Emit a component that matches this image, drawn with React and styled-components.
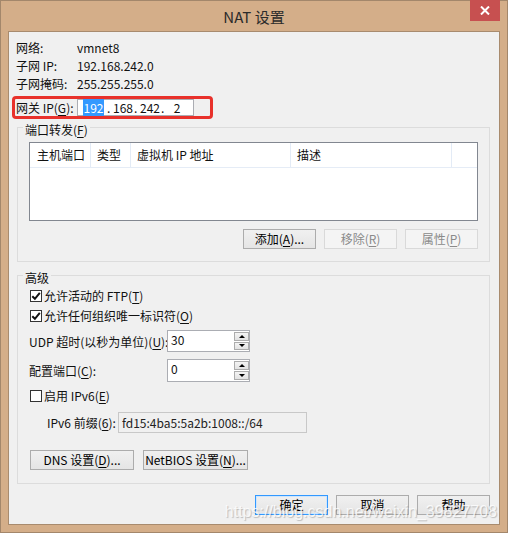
import React from "react";
import styled, { createGlobalStyle, css } from "styled-components";

const GlobalStyle = createGlobalStyle`
  html, body {
    margin: 0;
    padding: 0;
    background: #ffffff;
  }
  body {
    font-family: "Noto Sans CJK SC", "Noto Sans", sans-serif;
    font-size: 12px;
    color: #111;
  }
  * {
    box-sizing: border-box;
  }
`;

const Window = styled.div`
  position: relative;
  width: 508px;
  height: 533px;
  background: #d4ae89;
  border: 1px solid #a3876b;
  padding: 0 7px 7px;
  display: flex;
  flex-direction: column;
`;

const TitleBar = styled.div`
  height: 30px;
  display: grid;
  grid-template-columns: 1fr auto 1fr;
  align-items: center;
`;

const Title = styled.div`
  grid-column: 2;
  font-size: 15px;
  line-height: 20px;
  color: #2b2b2b;
  padding-top: 1px;
`;

const CloseButton = styled.div`
  grid-column: 3;
  justify-self: end;
  align-self: start;
  margin-top: -1px;
  width: 30px;
  height: 21px;
  background: #c75050;
  display: flex;
  align-items: center;
  justify-content: center;
`;

const Client = styled.div`
  flex: 1;
  background: #f0f0f0;
  border: 1px solid #a88b6e;
  padding: 7px 9px 0 3px;
  display: flex;
  flex-direction: column;
`;

const InfoRow = styled.div`
  display: flex;
  height: 18px;
  line-height: 18px;
  padding-left: 4px;
`;

const Label = styled.span`
  flex: none;
  width: ${p => p.$w || 61}px;
  padding-left: ${p => p.$pad || 0}px;
  white-space: nowrap;
`;

const Key = styled.span`
  text-decoration: underline;
  text-underline-offset: 2px;
`;

const Highlight = styled.div`
  margin-top: 3px;
  width: 201px;
  height: 23px;
  border: 3px solid #e8312b;
  border-radius: 4px;
  display: flex;
  align-items: center;
  padding-left: 1px;
`;

const IpBox = styled.div`
  width: 117px;
  height: 17px;
  background: #fff;
  border: 1px solid #abadb3;
  display: flex;
  align-items: center;
  padding-left: 2px;
  line-height: 15px;
`;

const Octet = styled.div`
  width: 27px;
  display: flex;
`;

const Dot = styled.span`
  width: 5px;
`;

const Num = styled.span`
  flex: 1;
  text-align: center;
`;

const Selected = styled.span`
  background: #3399ff;
  color: #fff;
  padding: 0 1px;
`;

const Group = styled.fieldset`
  margin: ${p => p.$top}px 0 0 5px;
  padding: ${p => p.$pad};
  border: 1px solid #dcdcdc;
  min-width: 0;
`;

const Legend = styled.legend`
  padding: 6px 2px 0;
  margin-left: -6px;
  line-height: 14px;
`;

const ListView = styled.div`
  height: 79px;
  background: #fff;
  border: 1px solid #828790;
`;

const ListHeader = styled.div`
  display: flex;
  height: 25px;
  border-bottom: 1px solid #e5ecf6;
`;

const Column = styled.div`
  flex: ${p => (p.$w ? "none" : 1)};
  width: ${p => (p.$w ? `${p.$w}px` : "auto")};
  padding-left: ${p => p.$pad || 6}px;
  line-height: 24px;
  border-right: ${p => (p.$last ? "none" : "1px solid #e3ebf6")};
  white-space: nowrap;
`;

const ButtonRow = styled.div`
  display: flex;
  justify-content: ${p => (p.$left ? "flex-start" : "flex-end")};
  gap: ${p => p.$gap || 8}px;
  margin-top: ${p => p.$top || 0}px;
  padding-left: ${p => (p.$left ? 1 : 0)}px;
`;

const Button = styled.button`
  width: ${p => p.$w || 73}px;
  height: 20px;
  padding: 0;
  font: inherit;
  line-height: 16px;
  color: #000;
  border: 1px solid #acacac;
  border-radius: 0;
  background: linear-gradient(#f0f0f0, #e5e5e5);
  white-space: nowrap;
  ${p =>
    p.disabled &&
    css`
      color: #8a8a8a;
      border-color: #d9d9d9;
      background: #f4f4f4;
    `}
  ${p =>
    p.$primary &&
    css`
      border-color: #3399ff;
      box-shadow: inset 0 0 0 1px #cfe6fd;
    `}
`;

const CheckRow = styled.div`
  display: flex;
  align-items: center;
  height: 18px;
  margin-top: ${p => p.$top || 0}px;
  padding-left: 1px;
`;

const Box = styled.span`
  width: 12px;
  height: 12px;
  flex: none;
  background: #fff;
  border: 1px solid #333;
  display: flex;
  align-items: center;
  justify-content: center;
`;

const CheckText = styled.span`
  margin-left: 2px;
  line-height: 18px;
`;

const SpinRow = styled.div`
  display: flex;
  align-items: center;
  height: ${p => p.$h || 22}px;
  margin-top: ${p => p.$top || 0}px;
`;

const SpinBox = styled.div`
  width: 83px;
  height: 100%;
  display: flex;
  background: #fff;
  border: 1px solid #abadb3;
`;

const SpinValue = styled.span`
  flex: 1;
  padding-left: 3px;
  line-height: 18px;
`;

const SpinButtons = styled.div`
  width: 15px;
  display: flex;
  flex-direction: column;
  gap: 1px;
  padding: 1px 0;
`;

const SpinButton = styled.div`
  flex: 1;
  border: 1px solid #acacac;
  background: linear-gradient(#f4f4f4, #e2e2e2);
  display: flex;
  align-items: center;
  justify-content: center;
`;

const Arrow = styled.span`
  width: 0;
  height: 0;
  border-left: 3px solid transparent;
  border-right: 3px solid transparent;
  ${p =>
    p.$down
      ? css`
          border-top: 3px solid #000;
        `
      : css`
          border-bottom: 3px solid #000;
        `}
`;

const PrefixRow = styled.div`
  display: flex;
  align-items: center;
  height: 21px;
  margin-top: 7px;
`;

const ReadonlyField = styled.div`
  width: 189px;
  height: 100%;
  border: 1px solid #c8c8c8;
  background: #f0f0f0;
  padding-left: 3px;
  line-height: 19px;
  color: #222;
`;

const Watermark = styled.div`
  position: absolute;
  right: 10px;
  bottom: 11px;
  font-family: "Liberation Sans", Arial, sans-serif;
  font-size: 16px;
  line-height: 18px;
  color: rgba(255, 255, 255, 0.8);
  text-shadow: 1px 1px 1px rgba(0, 0, 0, 0.22);
  pointer-events: none;
`;

const Check = () => (
  <svg width="10" height="10" viewBox="0 0 10 10">
    <path d="M1.3 5.2 L3.9 7.8 L8.8 1.8" fill="none" stroke="#111" strokeWidth="2" />
  </svg>
);

const Checkbox = ({ checked, top, children }) => (
  <CheckRow $top={top}>
    <Box>{checked && <Check />}</Box>
    <CheckText>{children}</CheckText>
  </CheckRow>
);

const Spinner = ({ value }) => (
  <SpinBox>
    <SpinValue>{value}</SpinValue>
    <SpinButtons>
      <SpinButton>
        <Arrow />
      </SpinButton>
      <SpinButton>
        <Arrow $down />
      </SpinButton>
    </SpinButtons>
  </SpinBox>
);

const octets = ["192", "168", "242", "2"];

const columns = [
  { title: "主机端口", w: 61, pad: 7 },
  { title: "类型", w: 40 },
  { title: "虚拟机 IP 地址", w: 160 },
  { title: "描述", w: 161 },
  { title: "", last: true }
];

export default function App() {
  return (
    <>
      <GlobalStyle />
      <Window>
        <TitleBar>
          <Title>NAT 设置</Title>
          <CloseButton>
            <svg width="10" height="9" viewBox="0 0 10 9">
              <path d="M1 0.5 L9 8.5 M9 0.5 L1 8.5" stroke="#fff" strokeWidth="2" />
            </svg>
          </CloseButton>
        </TitleBar>
        <Client>
          <InfoRow>
            <Label>网络:</Label>
            <span>vmnet8</span>
          </InfoRow>
          <InfoRow>
            <Label>子网 IP:</Label>
            <span>192.168.242.0</span>
          </InfoRow>
          <InfoRow>
            <Label>子网掩码:</Label>
            <span>255.255.255.0</span>
          </InfoRow>

          <Highlight>
            <Label>
              网关 IP(<Key>G</Key>):
            </Label>
            <IpBox>
              {octets.map((o, i) => (
                <Octet key={i}>
                  {i > 0 && <Dot>.</Dot>}
                  <Num>{i === 0 ? <Selected>{o}</Selected> : o}</Num>
                </Octet>
              ))}
            </IpBox>
          </Highlight>

          <Group $top={-2} $pad="5px 11px 12px">
            <Legend>
              端口转发(<Key>F</Key>)
            </Legend>
            <ListView>
              <ListHeader>
                {columns.map((c, i) => (
                  <Column key={i} $w={c.w} $pad={c.pad} $last={c.last}>
                    {c.title}
                  </Column>
                ))}
              </ListHeader>
            </ListView>
            <ButtonRow $top={8}>
              <Button>
                添加(<Key>A</Key>)...
              </Button>
              <Button disabled>
                移除(<Key>R</Key>)
              </Button>
              <Button disabled>
                属性(<Key>P</Key>)
              </Button>
            </ButtonRow>
          </Group>

          <Group $top={3} $pad="2px 11px 13px">
            <Legend>高级</Legend>
            <Checkbox checked>
              允许活动的 FTP(<Key>T</Key>)
            </Checkbox>
            <Checkbox checked top={2}>
              允许任何组织唯一标识符(<Key>O</Key>)
            </Checkbox>
            <SpinRow $top={5}>
              <Label $w={138}>
                UDP 超时(以秒为单位)(<Key>U</Key>):
              </Label>
              <Spinner value="30" />
            </SpinRow>
            <SpinRow $top={7} $h={23}>
              <Label $w={138}>
                配置端口(<Key>C</Key>):
              </Label>
              <Spinner value="0" />
            </SpinRow>
            <Checkbox top={5}>
              启用 IPv6(<Key>E</Key>)
            </Checkbox>
            <PrefixRow>
              <Label $w={89} $pad={18}>
                IPv6 前缀(<Key>6</Key>):
              </Label>
              <ReadonlyField>fd15:4ba5:5a2b:1008::/64</ReadonlyField>
            </PrefixRow>
            <ButtonRow $top={17} $gap={9} $left>
              <Button $w={104}>
                DNS 设置(<Key>D</Key>)...
              </Button>
              <Button $w={105}>
                NetBIOS 设置(<Key>N</Key>)...
              </Button>
            </ButtonRow>
          </Group>

          <ButtonRow $top={11}>
            <Button $primary>确定</Button>
            <Button>取消</Button>
            <Button>帮助</Button>
          </ButtonRow>
        </Client>
        <Watermark>https://blog.csdn.net/weixin_39827708</Watermark>
      </Window>
    </>
  );
}
